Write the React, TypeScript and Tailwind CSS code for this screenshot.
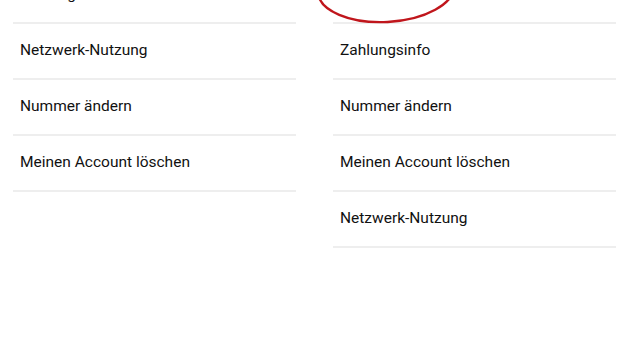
const LEFT = ["Zahlungsinfo", "Netzwerk-Nutzung", "Nummer ändern", "Meinen Account löschen"];
const RIGHT = ["Datenschutz", "Zahlungsinfo", "Nummer ändern", "Meinen Account löschen", "Netzwerk-Nutzung"];

function Row({ label }: { label: string }) {
  return (
    <div className="h-[56px] flex items-center px-[7px] border-b-2 border-[#eeeeee] text-[15.5px] text-[#111111]">
      {label}
    </div>
  );
}

export default function App() {
  return (
    <div
      className="w-[628px] h-[358px] bg-white overflow-hidden flex"
      style={{ fontFamily: "Roboto, 'Noto Sans', sans-serif" }}
    >
      <div className="w-[283px] ml-[13px] -mt-[32px]">
        {LEFT.map((l) => (
          <Row key={l} label={l} />
        ))}
      </div>
      <div className="relative w-[283px] ml-[37px] -mt-[32px]">
        {RIGHT.map((l) => (
          <Row key={l} label={l} />
        ))}
        {/* red marker circle drawn round the first entry */}
        <svg
          className="absolute left-[-20px] top-[-10px] pointer-events-none"
          width="160"
          height="70"
          viewBox="0 0 160 70"
        >
          <ellipse
            cx="73"
            cy="31"
            rx="68"
            ry="33"
            fill="none"
            stroke="#c0161c"
            strokeWidth="2.4"
            transform="rotate(-3 73 31)"
          />
        </svg>
      </div>
    </div>
  );
}
